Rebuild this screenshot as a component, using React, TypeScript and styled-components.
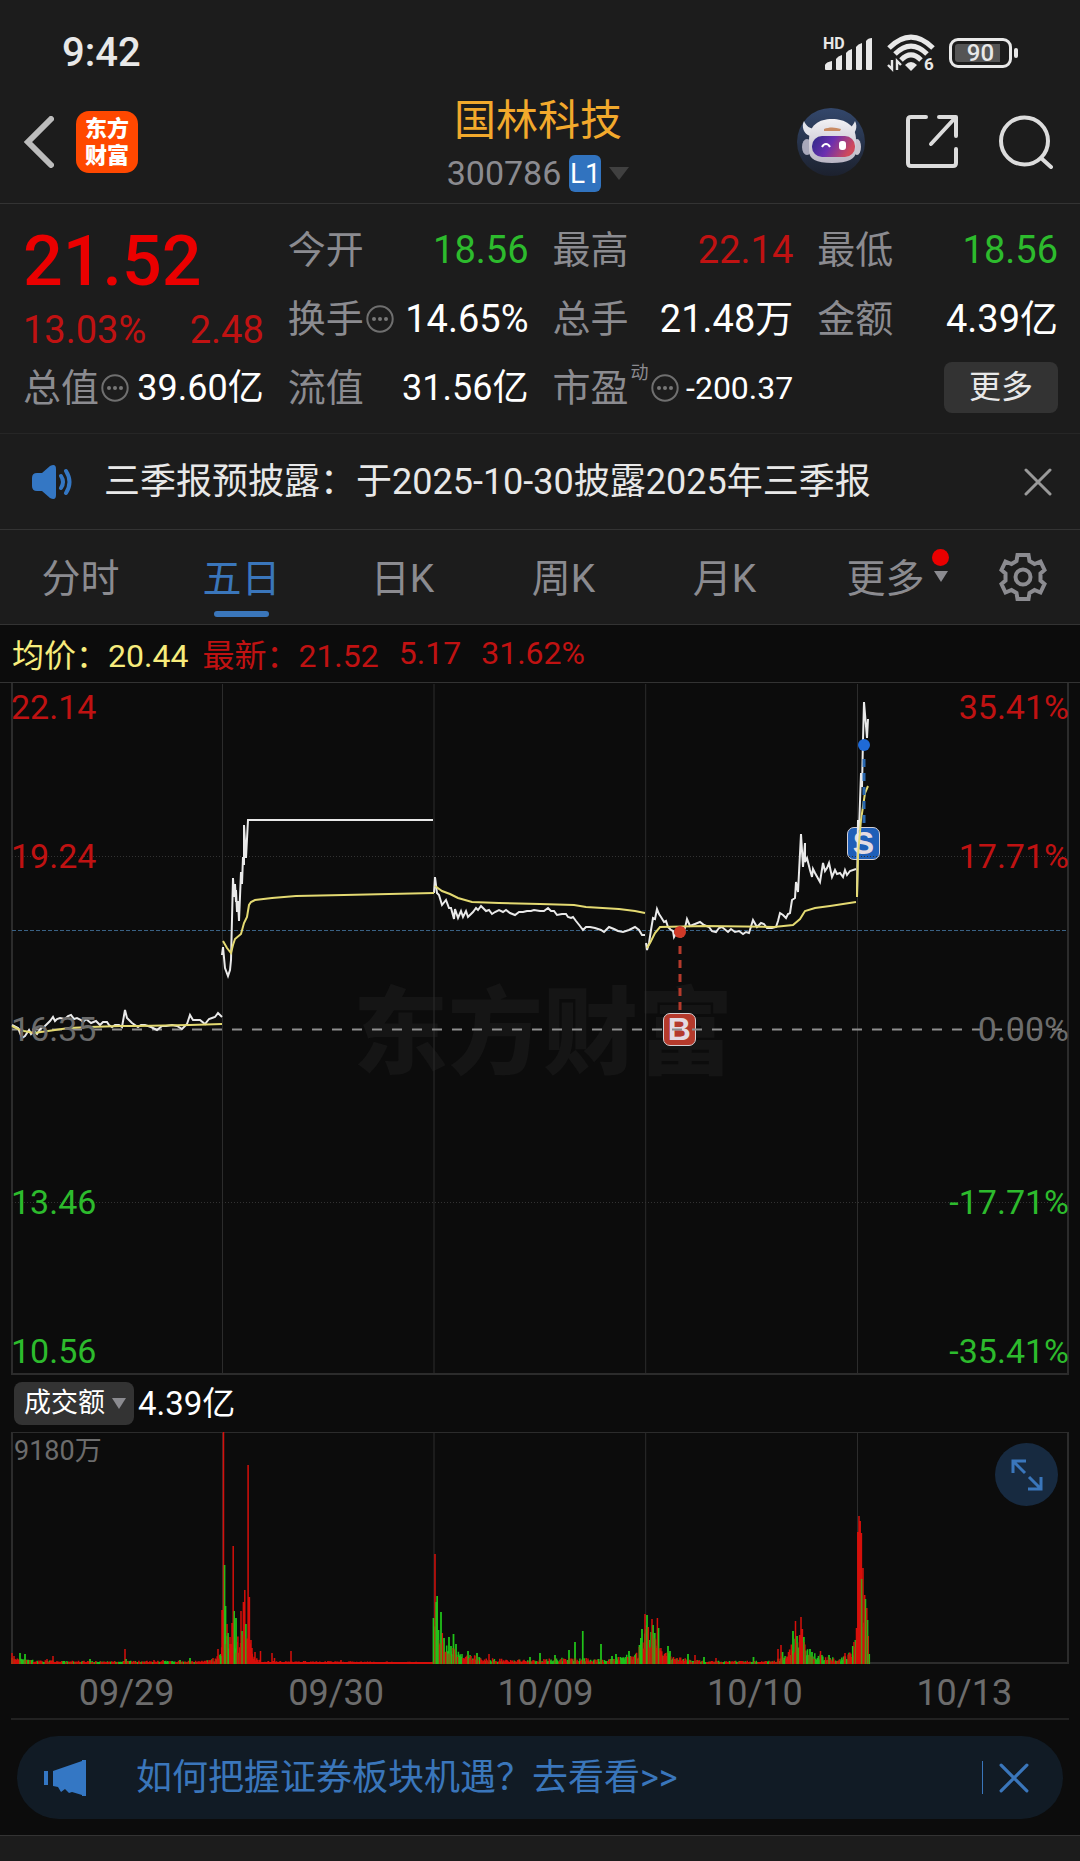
import React from "react";
import styled, { createGlobalStyle } from "styled-components";

const color = {
  panel: "#1c1c1c",
  ink: "#0c0c0c",
  line: "#333333",
  faint: "#262626",
  grid: "#2c2c2c",
  label: "#8b8b90",
  muted: "#6c6c6c",
  text: "#e8e8e8",
  white: "#ffffff",
  up: "#c01212",
  upStrong: "#ea0000",
  down: "#2dbb2d",
  gold: "#f2a92c",
  blue: "#3a76bb",
  yellow: "#f7ec7c",
};

const Global = createGlobalStyle`
  * { box-sizing: border-box; }
  body {
    margin: 0;
    background: ${color.ink};
    font-family: Roboto, "Noto Sans CJK SC", sans-serif;
    color: ${color.text};
  }
  button { font: inherit; color: inherit; background: none; border: 0; padding: 0; cursor: pointer; }
  svg { display: block; }
`;

const Page = styled.div`
  min-height: 100vh;
  display: flex;
  flex-direction: column;
`;

/* ---------- status bar ---------- */

const StatusBar = styled.div`
  height: 80px;
  padding: 25px 62px 0;
  display: flex;
  align-items: center;
  justify-content: space-between;
  background: ${color.panel};
`;
const Clock = styled.time`
  font-size: 40px;
  line-height: 48px;
  font-weight: 500;
`;
const StatusIcons = styled.div`
  display: flex;
  align-items: center;
  gap: 14px;
`;
const Battery = styled.div`
  display: flex;
  align-items: center;
  gap: 2px;
  &::after {
    content: "";
    width: 4px;
    height: 10px;
    border-radius: 2px;
    background: ${color.text};
  }
`;
const BatteryBody = styled.div`
  width: 63px;
  height: 30px;
  padding: 3px;
  border: 3px solid ${color.text};
  border-radius: 9px;
`;
const BatteryFill = styled.div`
  height: 18px;
  border-radius: 3px;
  background: linear-gradient(90deg, #555 88%, transparent 88%);
  font-size: 24px;
  line-height: 18px;
  font-weight: 500;
  text-align: center;
`;

/* ---------- header ---------- */

const Header = styled.header`
  height: 124px;
  padding: 0 27px 0 23px;
  display: grid;
  grid-template-columns: 1fr auto 1fr;
  align-items: center;
  background: ${color.panel};
  border-bottom: 1px solid ${color.line};
`;
const HeaderStart = styled.div`
  display: flex;
  align-items: center;
  gap: 22px;
`;
const HeaderEnd = styled.div`
  display: flex;
  align-items: center;
  justify-content: flex-end;
  gap: 41px;
`;
const AppMark = styled.button`
  width: 62px;
  height: 62px;
  border-radius: 13px;
  background: #ff4800;
  color: #fff;
  font-size: 22px;
  line-height: 27px;
  font-weight: 900;
`;
const TitleBlock = styled.div`
  padding-top: 10px;
  display: grid;
  justify-items: center;
`;
const Title = styled.h1`
  margin: 0;
  font-size: 42px;
  line-height: 53px;
  font-weight: 400;
  color: ${color.gold};
`;
const CodeButton = styled.button`
  display: flex;
  align-items: center;
  gap: 8px;
  height: 53px;
  font-size: 34px;
  color: ${color.label};
`;
const LevelBadge = styled.span`
  width: 32px;
  height: 37px;
  border-radius: 6px;
  background: #3173bf;
  color: #fff;
  font-size: 28px;
  line-height: 37px;
`;
const Caret = styled.span<{ $w: number; $h: number; $c: string }>`
  border-left: ${(p) => p.$w}px solid transparent;
  border-right: ${(p) => p.$w}px solid transparent;
  border-top: ${(p) => p.$h}px solid ${(p) => p.$c};
`;

/* ---------- quote ---------- */

const Quote = styled.section`
  display: grid;
  grid-template-columns: repeat(4, 1fr);
  grid-auto-rows: 69px;
  column-gap: 24px;
  padding: 11px 22px 11px 23px;
  background: ${color.panel};
  border-bottom: 1px solid ${color.faint};
`;
const Headline = styled.div`
  grid-row: span 2;
`;
const Price = styled.div`
  font-size: 70px;
  line-height: 92px;
  font-weight: 500;
  color: ${color.upStrong};
`;
const Change = styled.div`
  display: flex;
  justify-content: space-between;
  font-size: 38px;
  line-height: 46px;
  color: ${color.up};
`;
const Stat = styled.div`
  display: flex;
  align-items: center;
  justify-content: space-between;
  white-space: nowrap;
`;
const StatLabel = styled.span`
  display: flex;
  align-items: center;
  gap: 2px;
  font-size: 38px;
  line-height: 48px;
  color: ${color.label};
`;
const StatNote = styled.sup`
  align-self: flex-start;
  font-size: 18px;
  line-height: 18px;
`;
const StatValue = styled.span<{ $tone?: string; $size?: number }>`
  font-size: ${(p) => p.$size ?? 38}px;
  line-height: 48px;
  color: ${(p) => p.$tone ?? color.white};
`;
const MoreButton = styled.button`
  align-self: center;
  justify-self: end;
  width: 114px;
  height: 51px;
  border-radius: 8px;
  background: #333;
  font-size: 32px;
  line-height: 51px;
`;

/* ---------- notice ---------- */

const Notice = styled.section`
  height: 96px;
  padding: 0 28px 0 31px;
  display: flex;
  align-items: center;
  gap: 31px;
  background: ${color.panel};
  border-bottom: 1px solid ${color.line};
`;
const NoticeText = styled.p`
  flex: 1;
  margin: 0;
  font-size: 36px;
  line-height: 48px;
  white-space: nowrap;
`;

/* ---------- tabs ---------- */

const Tabs = styled.nav`
  height: 95px;
  display: flex;
  background: ${color.panel};
  border-bottom: 1px solid ${color.line};
`;
const Tab = styled.button<{ $active?: boolean }>`
  flex: 1;
  display: flex;
  align-items: center;
  justify-content: center;
  position: relative;
  padding-bottom: 4px;
  font-size: 39px;
  color: ${(p) => (p.$active ? color.blue : color.label)};
  &::after {
    content: "";
    display: ${(p) => (p.$active ? "block" : "none")};
    position: absolute;
    left: calc(50% - 28px);
    bottom: 7px;
    width: 55px;
    height: 6px;
    border-radius: 3px;
    background: ${color.blue};
  }
`;
const TabMark = styled.span`
  position: absolute;
  right: 17px;
  top: 19px;
  display: grid;
  justify-items: center;
  gap: 5px;
`;
const RedDot = styled.span`
  width: 17px;
  height: 17px;
  border-radius: 50%;
  background: ${color.upStrong};
`;
const SettingsButton = styled.button`
  width: 114px;
  display: grid;
  place-items: center;
`;

/* ---------- charts ---------- */

const Legend = styled.div`
  height: 58px;
  padding: 0 12px 2px;
  display: flex;
  align-items: center;
  font-size: 32px;
  color: ${color.up};
  border-bottom: 1px solid ${color.line};
`;
const LegendItem = styled.span<{ $tone?: string; $gap: number }>`
  color: ${(p) => p.$tone ?? color.up};
  margin-right: ${(p) => p.$gap}px;
`;
const PriceChart = styled.section`
  position: relative;
  height: 692px;
  margin: 0 11px;
`;
const Canvas = styled.svg`
  position: absolute;
  inset: 0;
  width: 100%;
  height: 100%;
`;
const Watermark = styled.div`
  position: absolute;
  inset: 0;
  display: grid;
  place-items: center;
  padding: 0 0 8px 6px;
  font-size: 95px;
  font-weight: 900;
  color: #151515;
`;
const Axis = styled.div<{ $end?: boolean }>`
  position: absolute;
  inset: 0;
  display: grid;
  grid-template-rows: 1fr 2fr 2fr 2fr 1fr;
  align-items: center;
  justify-content: ${(p) => (p.$end ? "end" : "start")};
  text-align: ${(p) => (p.$end ? "right" : "left")};
  pointer-events: none;
`;
const Tick = styled.span<{ $tone: string; $at?: string }>`
  align-self: ${(p) => p.$at ?? "center"};
  font-size: 34px;
  line-height: 48px;
  color: ${(p) => p.$tone};
`;
const TradeTag = styled.span<{ $tone: string; $x: number; $y: number }>`
  position: absolute;
  left: ${(p) => p.$x}%;
  top: ${(p) => p.$y}%;
  width: 33px;
  height: 33px;
  border: 1px solid #d5d0d4;
  border-radius: 7px;
  background: ${(p) => p.$tone};
  color: #e4dbe2;
  font: 700 32px/31px "Liberation Sans", sans-serif;
  text-align: center;
`;
const VolumeBar = styled.div`
  height: 57px;
  padding: 0 14px;
  display: flex;
  align-items: center;
  gap: 4px;
  color: ${color.white};
  font-size: 33px;
  line-height: 43px;
`;
const VolumePicker = styled.button`
  width: 120px;
  height: 43px;
  padding: 0 8px 0 10px;
  display: flex;
  align-items: center;
  justify-content: space-between;
  border-radius: 8px;
  background: #333;
  font-size: 27px;
`;
const VolumeChart = styled.section`
  position: relative;
  height: 232px;
  margin: 0 11px;
`;
const VolumeMax = styled.span`
  position: absolute;
  left: 3px;
  top: 2px;
  font-size: 27px;
  line-height: 34px;
  color: ${color.muted};
`;
const ExpandButton = styled.button`
  position: absolute;
  right: 11px;
  top: 11px;
  width: 63px;
  height: 63px;
  border-radius: 50%;
  background: #172a40;
  display: grid;
  place-items: center;
`;
const Dates = styled.div`
  height: 56px;
  margin: 0 11px;
  padding: 3px 0 0 11px;
  display: grid;
  grid-template-columns: repeat(5, 1fr);
  align-items: center;
  text-align: center;
  font-size: 36px;
  color: ${color.muted};
  border-bottom: 2px solid #222;
`;

/* ---------- bottom ---------- */

const Banner = styled.aside`
  height: 83px;
  margin: 16px 17px;
  padding: 0 34px 0 27px;
  display: flex;
  align-items: center;
  border-radius: 42px;
  background: #111b25;
  color: ${color.blue};
`;
const BannerLink = styled.a`
  flex: 1;
  margin-left: 49px;
  font-size: 36px;
  line-height: 48px;
  white-space: nowrap;
  color: inherit;
  text-decoration: none;
`;
const BannerRule = styled.span`
  width: 1px;
  height: 33px;
  margin-right: 16px;
  background: ${color.blue};
`;
const Footer = styled.footer`
  flex: 1;
  min-height: 26px;
  background: ${color.panel};
  border-top: 1px solid ${color.line};
`;

/* ---------- icons ---------- */

const MoreDots = () => (
  <svg width="28" height="28" viewBox="0 0 28 28" fill="none">
    <circle cx="14" cy="14" r="12.7" stroke="#6f6f6f" strokeWidth="2" />
    <g fill="#777">
      <circle cx="8" cy="14" r="2" />
      <circle cx="14" cy="14" r="2" />
      <circle cx="20" cy="14" r="2" />
    </g>
  </svg>
);

const Cross = ({ size, stroke, width }: { size: number; stroke: string; width: number }) => (
  <svg width={size} height={size} viewBox="0 0 28 28" fill="none" stroke={stroke} strokeWidth={width} strokeLinecap="round">
    <path d="M2 2 26 26M26 2 2 26" />
  </svg>
);

const Robot = () => (
  <svg width="68" height="68" viewBox="0 0 68 68">
    <defs>
      <linearGradient id="sky" x1="0" y1="0" x2="0" y2="1">
        <stop offset="0" stopColor="#33476b" />
        <stop offset="1" stopColor="#1c212e" />
      </linearGradient>
      <linearGradient id="visor" x1="0" y1="0" x2="1" y2="0.3">
        <stop offset="0" stopColor="#2d2a86" />
        <stop offset="0.5" stopColor="#6a2fb0" />
        <stop offset="1" stopColor="#d04a5c" />
      </linearGradient>
      <linearGradient id="shell" x1="0" y1="0" x2="0" y2="1">
        <stop offset="0" stopColor="#f2f1f4" />
        <stop offset="1" stopColor="#b9b5c4" />
      </linearGradient>
    </defs>
    <circle cx="34" cy="34" r="34" fill="url(#sky)" />
    <path d="M7 13c-3 6 0 13 6 15l6-7c-6 0-10-3-12-8ZM58 13c3 6 1 13-6 15l-5-7c6 0 9-3 11-8Z" fill="#e4e4ea" />
    <ellipse cx="10" cy="39" rx="5" ry="8" fill="#a9a9bb" />
    <ellipse cx="60" cy="39" rx="4" ry="8" fill="#c9c5d0" />
    <path d="M12 32C12 17 22 11 35 11s24 6 24 21v11c0 8-8 12-24 12S12 51 12 43Z" fill="url(#shell)" />
    <path d="M27 21c5-2 11-2 17 0l-1 2H27Z" fill="#c98a62" />
    <rect x="15" y="28" width="43" height="21" rx="10" fill="url(#visor)" />
    <path d="M25 39c2-4 6-4 8 0" fill="none" stroke="#fff" strokeWidth="2" />
    <rect x="42" y="33" width="7" height="9" rx="3" fill="#fff" />
  </svg>
);

const Signal = () => (
  <svg width="50" height="42" viewBox="0 -5 50 42" fill={color.text}>
    <text x="0" y="12" fontSize="16" fontWeight="700" fontFamily="Roboto">HD</text>
    <path d="M2 28q1-3 7-4v8q0 1-1 1H3q-1 0-1-1ZM13 22q2-3 6-4v14q0 1-1 1h-4q-1 0-1-1ZM23 16q2-3 6-4v20q0 1-1 1h-4q-1 0-1-1ZM33 10q2-3 6-4v26q0 1-1 1h-4q-1 0-1-1ZM43 4q2-3 6-3v31q0 1-1 1h-4q-1 0-1-1Z" />
  </svg>
);

const Wifi = () => (
  <svg width="48" height="46" viewBox="0 -4 48 46" fill="none" stroke={color.text} strokeWidth="5">
    <path d="M2 14Q24-8 46 14M8 20Q24 4 40 20M14 26Q24 16 34 26" />
    <path d="M18 31q6-6 12 0l-6 6Z" fill={color.text} stroke="none" />
    <path d="M5 26v9l-4-4M10 36v-9l4 4" strokeWidth="2.4" />
    <text x="37" y="36" fontSize="17" fontWeight="700" fontFamily="Roboto" fill={color.text} stroke="none">6</text>
  </svg>
);

const Gear = () => (
  <svg width="48" height="50" viewBox="0 0 48 50" fill="none" stroke={color.label} strokeWidth="4">
    <path d="M18.5 3h11l1 6 5 3 6-2.500 4 8.500-4 3.500v7l4 3.500-4 8.500-6-2.500-5 3-1 6h-11l-1-6-5-3-6 2.500-4-8.500 4-3.500v-7l-4-3.500 4-8.500 6 2.500 5-3Z" />
    <circle cx="24" cy="25" r="7.500" />
  </svg>
);

/* ---------- chart data ---------- */

const priceLines = [
  "12,1025 18,1028 22,1038 25,1036 29,1030 31,1034 34,1031 37,1034 41,1028 44,1027 47,1024 50,1021 53,1017 55,1021 57,1019 60,1018 65,1019 68,1016 71,1015 74,1019 77,1018 81,1020 83,1022 86,1019 91,1023 96,1021 100,1025 103,1022 107,1022 109,1025 112,1027 115,1025 119,1025 122,1027 125,1010 127,1018 129,1020 132,1023 138,1027 141,1025 145,1025 151,1027 157,1030 162,1026 166,1026 172,1025 177,1026 182,1029 187,1024 190,1015 193,1020 200,1020 205,1024 209,1019 212,1018 215,1017 218,1013 222,1017",
  "222,955 223,947 225,968 228,976 230,970 231,960 233,878 234,897 235,884 236,902 236,890 237,912 238,901 239,921 241,872 242,884 243,857 244,865 244,825 246,858 248,820 433,820",
  "434,893 435,877 437,893 439,895 442,905 446,900 449,908 451,908 454,919 455,909 458,918 461,911 463,917 466,911 468,917 471,914 473,912 476,908 478,910 481,906 484,909 486,911 489,910 492,914 495,912 499,910 503,912 506,910 510,913 515,915 519,912 523,912 527,911 531,911 534,910 540,911 544,911 548,908 551,911 554,911 557,915 562,914 566,914 568,917 571,918 573,917 576,921 580,926 583,930 586,927 590,927 595,928 601,930 604,932 609,927 614,929 618,931 623,932 629,930 635,927 639,930 642,935 645,935",
  "646,943 647,950 649,943 651,930 653,918 655,919 657,909 659,914 661,917 664,922 666,921 668,927 671,930 673,931 674,937 678,930 681,936 685,928 687,919 690,926 695,924 700,922 704,925 709,927 712,931 716,932 719,928 722,927 728,932 731,929 735,932 739,931 743,934 746,932 749,933 753,920 757,927 761,923 764,924 767,928 772,928 776,927 778,921 780,913 783,915 786,918 788,914 790,913 792,900 795,898 796,882 798,892 801,834 803,867 805,843 805,862 807,858 810,870 812,877 813,869 815,873 820,882 823,863 825,871 827,868 829,863 832,877 835,870 837,874 840,873 843,877 845,870 847,875 850,871 856,869",
  "857,897 858,820 859,830 861,773 862,787 863,740 864,702 865,714 867,738 868,719",
];

const averageLines = [
  "12,1026 18,1029 24,1031 34,1033 48,1031 69,1028 90,1027 120,1026 138,1026 190,1025 222,1024",
  "223,941 227,948 231,953 233,945 235,939 241,934 244,923 247,917 249,905 251,902 255,900 272,898 296,896 344,895 434,893",
  "435,886 442,891 450,894 458,898 472,902 499,903 540,904 574,905 586,907 619,909 635,911 645,913",
  "647,948 650,943 655,933 660,927 705,926 774,927 793,925 800,919 805,911 815,908 830,906 856,902",
  "857,897 858,855 861,820 865,793 868,786",
];

type Bar = [x: number, height: number, up: 0 | 1];

// Height of the ordinary minute bars along the time axis.
const envelope: [number, number][] = [
  [12, 6], [30, 4], [60, 3], [120, 3], [205, 3], [215, 6], [222, 20], [228, 28], [236, 24], [246, 30], [253, 8], [262, 3],
  [433, 2], [435, 40], [444, 24], [456, 12], [475, 8], [495, 5], [530, 4], [560, 6], [610, 5], [628, 9], [638, 12],
  [645, 40], [660, 16], [672, 8], [690, 5], [705, 3], [775, 3], [785, 9], [793, 22], [802, 28], [810, 11], [825, 8], [840, 5], [854, 14], [858, 50], [866, 40], [869, 5],
];

const peaks: Bar[] = [
  [12, 11, 1], [14, 8, 1], [20, 11, 0], [25, 10, 0], [47, 5, 1], [53, 8, 1], [90, 5, 0], [125, 15, 1], [126, 5, 0], [154, 4, 1], [163, 4, 1], [180, 4, 0], [190, 6, 0], [213, 6, 1], [218, 15, 1], [221, 8, 0],
  [222, 54, 1], [223.5, 232, 1], [224.5, 99, 0], [225.5, 58, 0], [227, 40, 1], [228, 31, 0], [230, 27, 1], [232, 41, 1], [233.2, 118, 1], [234.2, 53, 0], [236, 46, 0], [237.5, 22, 1], [241, 53, 1], [242, 33, 0], [243.4, 62, 1], [244.8, 74, 1], [245.8, 40, 0], [248.1, 199, 1], [249.4, 67, 1], [251, 24, 1], [252, 16, 1], [255, 12, 1], [260.5, 13, 1], [272, 11, 1], [274.5, 6, 1], [291, 13, 1], [341, 4, 1],
  [433.5, 46, 0], [435, 110, 1], [436, 62, 0], [437.2, 68, 0], [438.5, 34, 0], [441, 52, 0], [442.3, 31, 1], [444, 26, 0], [449, 27, 0], [451, 18, 0], [453.5, 30, 0], [456, 20, 0], [468, 13, 0], [477, 11, 0], [489, 10, 1], [530, 7, 0], [540, 11, 0], [555, 9, 0], [569, 14, 0], [575, 22, 0], [582.7, 33, 0], [601, 20, 0], [612, 8, 0], [616, 10, 0], [629, 13, 0],
  [639.5, 19, 0], [640.8, 26, 0], [642, 35, 0], [645, 50, 1], [647, 49, 0], [648, 34, 1], [652, 45, 1], [653, 39, 0], [654.7, 31, 0], [657.4, 46, 1], [658.5, 36, 0], [668, 18, 0], [670, 13, 0], [688, 10, 0], [695, 9, 1], [704, 7, 0], [716, 6, 1], [753.5, 7, 0], [778, 15, 1], [781, 19, 1], [782.5, 12, 0], [788.5, 12, 1], [793, 33, 0], [795.5, 43, 1], [797, 28, 0], [799.6, 29, 1], [801, 47, 1], [802.4, 35, 1], [803.8, 27, 0], [810, 15, 0], [812, 12, 0], [820.5, 13, 1], [829, 9, 0], [845, 11, 1], [852.7, 18, 0], [854, 22, 1], [856.5, 36, 1],
  [857.8, 132, 1], [859, 148, 1], [860.2, 143, 1], [861.4, 131, 1], [861.6, 85, 0], [863, 96, 1], [864.7, 69, 1], [865.4, 65, 0], [866.8, 56, 1], [867.5, 44, 0], [868.3, 28, 1], [869.3, 10, 0],
];

const envelopeAt = (x: number) => {
  for (let i = 1; i < envelope.length; i++) {
    const [x0, h0] = envelope[i - 1];
    const [x1, h1] = envelope[i];
    if (x <= x1) return h0 + ((h1 - h0) * (x - x0)) / (x1 - x0);
  }
  return 0;
};

const noise = (n: number) => {
  const v = Math.sin(n * 127.1) * 43758.5453;
  return v - Math.floor(v);
};

const ordinary: Bar[] = [];
for (let x = 12; x < 869; x += 0.9) {
  const up = (x > 248 && x < 434) || noise(x) > 0.5 ? 1 : 0;
  ordinary.push([x, Math.max(2, envelopeAt(x) * (0.4 + 0.7 * noise(x + 3))), up]);
}

const BASE = 232;
const barPath = (bars: Bar[], up: 0 | 1) =>
  bars
    .filter((b) => b[2] === up)
    .map(([x, h]) => `M${x.toFixed(1)} ${BASE}v${-h.toFixed(1)}`)
    .join("");
const allBars = [...ordinary, ...peaks];

const dayEdges = [222.5, 434, 645.7, 857.5];

const stats = [
  { label: "今开", value: "18.56", tone: color.down },
  { label: "最高", value: "22.14", tone: color.up },
  { label: "最低", value: "18.56", tone: color.down },
  { label: "换手", value: "14.65%", info: true },
  { label: "总手", value: "21.48万" },
  { label: "金额", value: "4.39亿" },
  { label: "总值", value: "39.60亿", info: true, size: 36 },
  { label: "流值", value: "31.56亿", size: 36 },
  { label: "市盈", note: "动", value: "-200.37", info: true, size: 32 },
];

const priceTicks = ["22.14", "19.24", "16.35", "13.46", "10.56"];
const percentTicks = ["35.41%", "17.71%", "0.00%", "-17.71%", "-35.41%"];
const tickTones = [color.up, color.up, color.muted, color.down, color.down];
const tickAt = (i: number) => (i === 0 ? "start" : i === 4 ? "end" : "center");

export default function App() {
  return (
    <Page>
      <Global />
      <StatusBar>
        <Clock>9:42</Clock>
        <StatusIcons>
          <Signal />
          <Wifi />
          <Battery>
            <BatteryBody>
              <BatteryFill>90</BatteryFill>
            </BatteryBody>
          </Battery>
        </StatusIcons>
      </StatusBar>

      <Header>
        <HeaderStart>
          <button aria-label="返回">
            <svg width="31" height="52" viewBox="0 0 31 52" fill="none" stroke="#bcbcbc" strokeWidth="6" strokeLinecap="round">
              <path d="M28 3 5 26l23 23" />
            </svg>
          </button>
          <AppMark>东方<br />财富</AppMark>
        </HeaderStart>
        <TitleBlock>
          <Title>国林科技</Title>
          <CodeButton>
            300786
            <LevelBadge>L1</LevelBadge>
            <Caret $w={10} $h={13} $c="#404040" />
          </CodeButton>
        </TitleBlock>
        <HeaderEnd>
          <button aria-label="助手"><Robot /></button>
          <button aria-label="分享">
            <svg width="52" height="53" viewBox="0 0 52 53" fill="none" stroke="#dcdcdc" strokeWidth="4" strokeLinecap="round" strokeLinejoin="round">
              <path d="M20 2H5Q2 2 2 5v43q0 3 3 3h42q3 0 3-3V34M33 2h17v19M49 3 25 29" />
            </svg>
          </button>
          <button aria-label="搜索">
            <svg width="54" height="54" viewBox="0 0 54 54" fill="none" stroke="#dcdcdc" strokeWidth="4" strokeLinecap="round">
              <circle cx="25.5" cy="26" r="23.5" />
              <path d="m42 43 10 9" />
            </svg>
          </button>
        </HeaderEnd>
      </Header>

      <Quote>
        <Headline>
          <Price>21.52</Price>
          <Change><span>13.03%</span><span>2.48</span></Change>
        </Headline>
        {stats.map((s) => (
          <Stat key={s.label}>
            <StatLabel>
              {s.label}
              {s.note && <StatNote>{s.note}</StatNote>}
              {s.info && <MoreDots />}
            </StatLabel>
            <StatValue $tone={s.tone} $size={s.size}>{s.value}</StatValue>
          </Stat>
        ))}
        <MoreButton>更多</MoreButton>
      </Quote>

      <Notice>
        <svg width="42" height="36" viewBox="0 0 42 36" fill="none" stroke="#3477c4" strokeWidth="4" strokeLinecap="round">
          <path d="M6 9h5L19 2q6-3 6 3v26q0 6-6 3l-8-7H6q-5 0-5-5v-8q0-5 5-5Z" fill="#3477c4" stroke="none" />
          <path d="M30 12q4 6 0 12M35 7q7 11 0 22" />
        </svg>
        <NoticeText>三季报预披露：于2025-10-30披露2025年三季报</NoticeText>
        <button aria-label="关闭"><Cross size={28} stroke="#999" width={3} /></button>
      </Notice>

      <Tabs>
        <Tab>分时</Tab>
        <Tab $active>五日</Tab>
        <Tab>日K</Tab>
        <Tab>周K</Tab>
        <Tab>月K</Tab>
        <Tab>
          更多
          <TabMark>
            <RedDot />
            <Caret $w={7} $h={11} $c={color.label} />
          </TabMark>
        </Tab>
        <SettingsButton aria-label="设置"><Gear /></SettingsButton>
      </Tabs>

      <Legend>
        <LegendItem $tone={color.yellow} $gap={14}>均价：20.44</LegendItem>
        <LegendItem $gap={20}>最新：21.52</LegendItem>
        <LegendItem $gap={20}>5.17</LegendItem>
        <LegendItem $gap={0}>31.62%</LegendItem>
      </Legend>

      <PriceChart>
        <Watermark>东方财富</Watermark>
        <TradeTag $tone="#b53a2c" $x={61.6} $y={47.7}>B</TradeTag>
        <TradeTag $tone="#1f5fb8" $x={79} $y={20.8}>S</TradeTag>
        <Canvas viewBox="11 683 1058 692" preserveAspectRatio="none" fill="none">
          <g stroke={color.grid}>
            {dayEdges.map((x) => <path key={x} d={`M${x} 684V1375`} />)}
            <path d="M12 683V1375M1068 683V1375M11 1374H1069" strokeWidth="2" />
            <path d="M12 856.5H1068M12 1202.5H1068" strokeDasharray="1 2" stroke="#333" />
          </g>
          <path d="M12 930.5H1068" stroke="#3a6285" strokeDasharray="4 2" />
          <path d="M12 1029.5H1068" stroke="#8e8e8e" strokeWidth="2" strokeDasharray="10 10" />
          <g stroke="#e9e9e9" strokeWidth="2">
            {priceLines.map((p) => <polyline key={p} points={p} />)}
          </g>
          <g stroke="#e4da72" strokeWidth="2">
            {averageLines.map((p) => <polyline key={p} points={p} />)}
          </g>
          <circle cx="680" cy="932" r="6" fill="#d03a28" />
          <path d="M680 946V1010" stroke="#b53a2c" strokeWidth="3" strokeDasharray="8 6" />
          <circle cx="864" cy="745" r="6" fill="#1f6ad6" />
          <path d="M864 759V825" stroke="#2a68b0" strokeWidth="3" strokeDasharray="8 6" />
        </Canvas>
        <Axis>
          {priceTicks.map((t, i) => <Tick key={t} $tone={tickTones[i]} $at={tickAt(i)}>{t}</Tick>)}
        </Axis>
        <Axis $end>
          {percentTicks.map((t, i) => <Tick key={t} $tone={tickTones[i]} $at={tickAt(i)}>{t}</Tick>)}
        </Axis>
      </PriceChart>

      <VolumeBar>
        <VolumePicker>
          成交额
          <Caret $w={7} $h={11} $c={color.label} />
        </VolumePicker>
        <span>4.39亿</span>
      </VolumeBar>

      <VolumeChart>
        <Canvas viewBox="11 0 1058 232" preserveAspectRatio="none" fill="none">
          <path d="M11 .5H1069" stroke={color.grid} />
          <path d="M12 0V232M1068 0V232M11 231H1069" stroke={color.grid} strokeWidth="2" />
          {dayEdges.map((x) => <path key={x} d={`M${x} 0V232`} stroke={color.grid} />)}
          <path d={barPath(allBars, 0)} stroke="#1fc01a" strokeWidth="1.5" />
          <path d={barPath(allBars, 1)} stroke="#d60f0a" strokeWidth="1.5" />
          <path d={barPath(peaks, 0)} stroke="#22c41a" strokeWidth="1.5" opacity="0.75" />
        </Canvas>
        <VolumeMax>9180万</VolumeMax>
        <ExpandButton aria-label="全屏">
          <svg width="32" height="32" viewBox="0 0 32 32" fill="none" stroke={color.blue} strokeWidth="3">
            <path d="M2 14V2h13M2 2l12 12M30 18v12H17M30 30 18 18" />
          </svg>
        </ExpandButton>
      </VolumeChart>

      <Dates>
        <span>09/29</span>
        <span>09/30</span>
        <span>10/09</span>
        <span>10/10</span>
        <span>10/13</span>
      </Dates>

      <Banner>
        <svg width="43" height="36" viewBox="0 0 43 36" fill="#3477c4">
          <path d="M0 11h4v14H0ZM9 11 38 1V0h4v36h-4v-1l-10-3-3 1-4-4-4 3-3-5-5-1Z" />
        </svg>
        <BannerLink href="#">如何把握证券板块机遇？去看看&gt;&gt;</BannerLink>
        <BannerRule />
        <button aria-label="关闭"><Cross size={30} stroke={color.blue} width={3} /></button>
      </Banner>
      <Footer />
    </Page>
  );
}
